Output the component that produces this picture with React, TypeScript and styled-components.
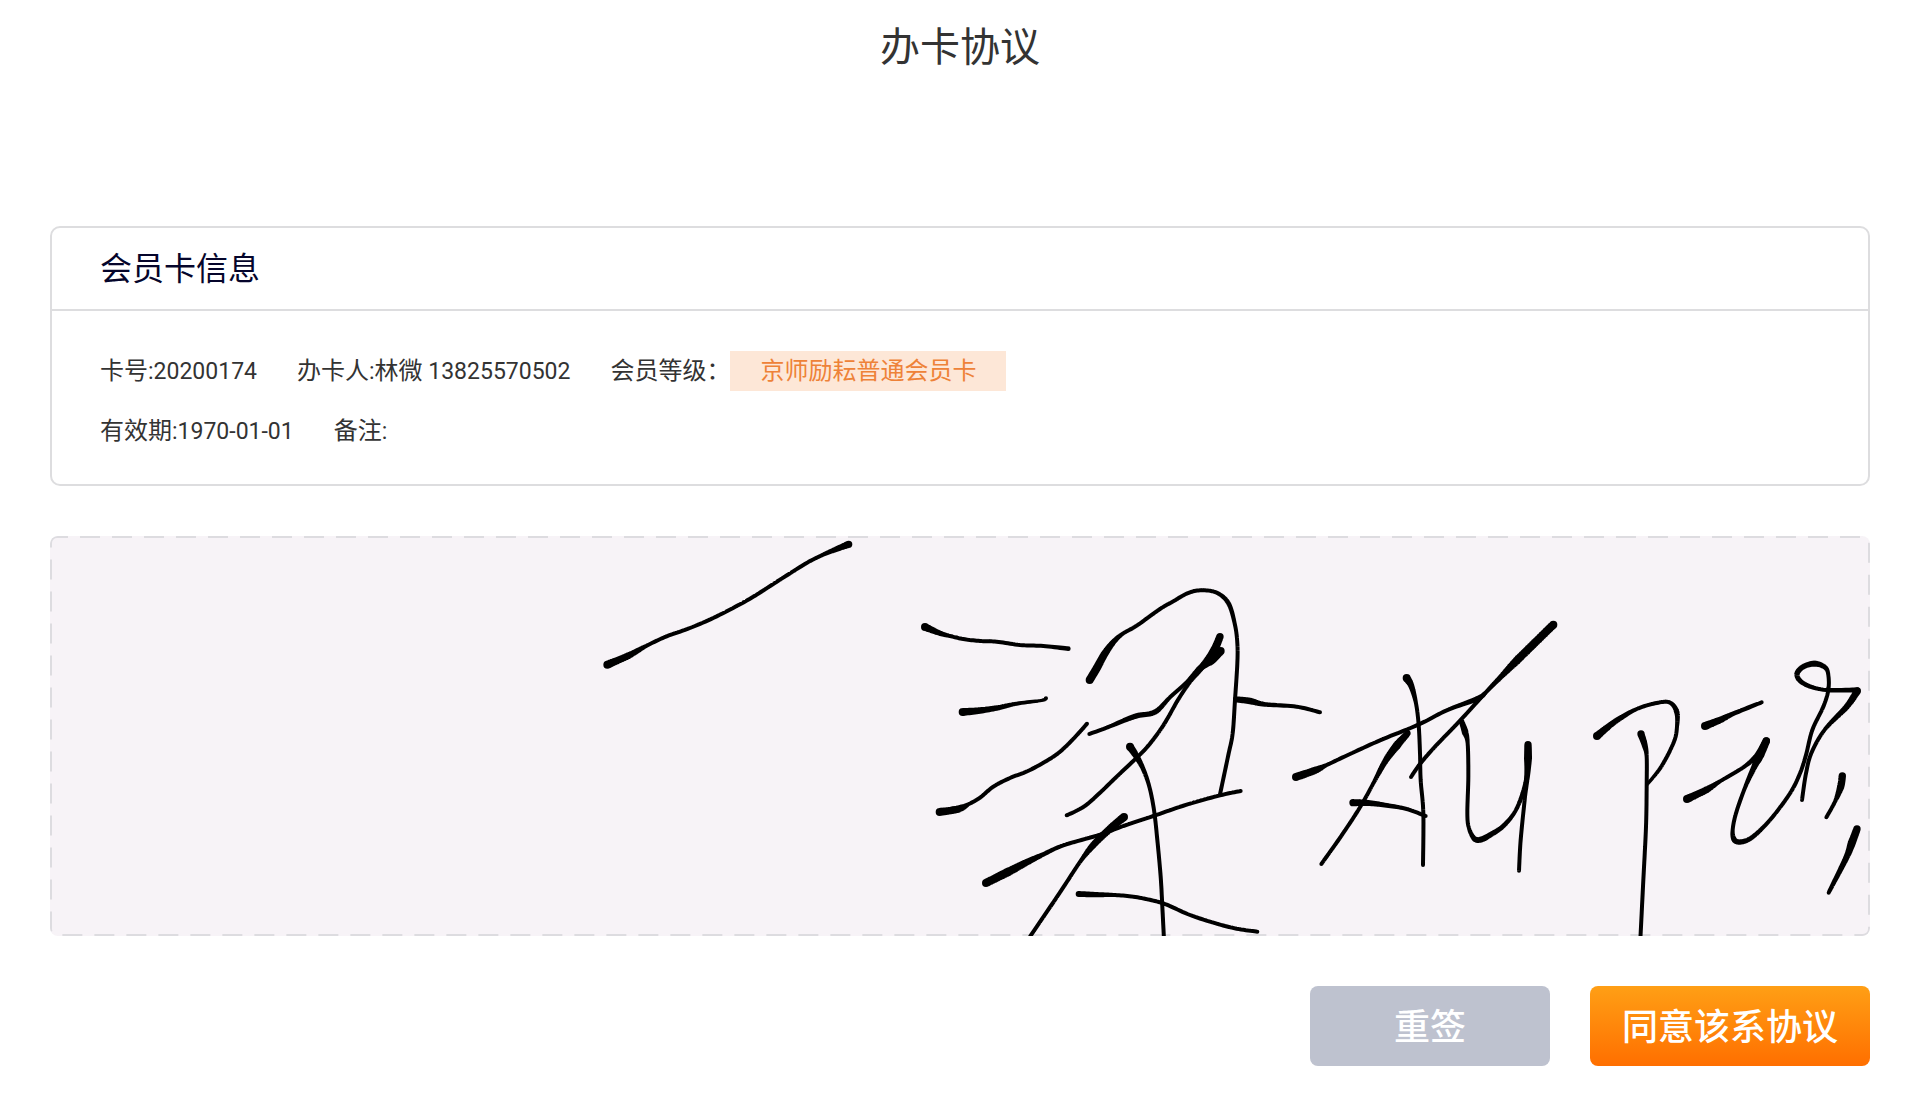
import React from "react";
import styled, { createGlobalStyle } from "styled-components";

const GlobalStyle = createGlobalStyle`
  * { box-sizing: border-box; }
  body {
    margin: 0;
    background: #ffffff;
    color: #333333;
    font-family: Roboto, "Noto Sans CJK SC", sans-serif;
  }
`;

const Page = styled.main`
  display: flex;
  flex-direction: column;
  padding: 18px 50px 50px;
`;

const PageTitle = styled.h1`
  margin: 0 0 148px;
  font-size: 40px;
  font-weight: 400;
  line-height: 60px;
  text-align: center;
`;

const Card = styled.section`
  border: 2px solid #dddddf;
  border-radius: 10px;
  margin-bottom: 50px;
`;

const CardTitle = styled.h2`
  margin: 0;
  padding: 16px 48px 15px;
  border-bottom: 2px solid #dddddf;
  color: #05052b;
  font-size: 32px;
  font-weight: 400;
  line-height: 50px;
`;

const CardBody = styled.div`
  display: flex;
  flex-direction: column;
  gap: 20px;
  padding: 40px 48px 33px;
`;

const InfoRow = styled.div`
  display: flex;
  flex-wrap: wrap;
  gap: 0 40px;
  font-size: 24px;
  line-height: 40px;
`;

const InfoItem = styled.div`
  display: flex;
  align-items: baseline;
  white-space: pre;
`;

const Digits = styled.span`
  font-size: 23px;
  line-height: 24px;
`;

const LevelTag = styled.span`
  padding: 0 30px;
  background: #fde7d7;
  color: #ee8238;
`;

const SignaturePad = styled.section`
  position: relative;
  overflow: hidden;
  border-radius: 8px;
  background: #f7f3f7;
  margin-bottom: 50px;
`;

const DashedFrame = styled.svg`
  position: absolute;
  inset: 0;
  width: 100%;
  height: 100%;

  rect {
    width: calc(100% - 2px);
    height: calc(100% - 2px);
    fill: none;
    stroke: #dddce0;
    stroke-width: 2px;
    stroke-dasharray: 20 12;
    stroke-dashoffset: 9px;
  }
`;

const Ink = styled.svg`
  position: relative;
  display: block;
  width: 100%;
  height: auto;
`;

const Actions = styled.footer`
  display: flex;
  justify-content: flex-end;
  gap: 40px;
`;

const ActionButton = styled.button<{ $primary?: boolean }>`
  min-width: 240px;
  height: 80px;
  padding: 4px 32px 0;
  border: 0;
  border-radius: 8px;
  background: ${(p) => (p.$primary ? "linear-gradient(#ff9f15, #ff6f00)" : "#bec2cf")};
  color: #ffffff;
  font-family: inherit;
  font-size: 36px;
  font-weight: 500;
  line-height: 54px;
  white-space: nowrap;
  cursor: pointer;
`;

/* A pen sample: x, y and the radius of the nib at that point. */
type Sample = [number, number, number];

const between = (a: number, b: number, c: number, d: number, t: number) =>
  0.5 *
  (2 * b + (c - a) * t + (2 * a - 5 * b + 4 * c - d) * t * t + (3 * b - a - 3 * c + d) * t * t * t);

/* Runs a smooth curve through the samples and returns the outline of the ink. */
function inkPath(samples: Sample[]): string {
  const dots: Sample[] = [];
  const steps = 10;
  for (let i = 0; i < samples.length - 1; i++) {
    const a = samples[Math.max(i - 1, 0)];
    const b = samples[i];
    const c = samples[i + 1];
    const d = samples[Math.min(i + 2, samples.length - 1)];
    for (let s = 0; s < steps; s++) {
      const t = s / steps;
      dots.push([
        between(a[0], b[0], c[0], d[0], t),
        between(a[1], b[1], c[1], d[1], t),
        b[2] + (c[2] - b[2]) * t,
      ]);
    }
  }
  dots.push(samples[samples.length - 1]);

  const f = (n: number) => n.toFixed(1);
  let path = "";
  dots.forEach(([x, y, r], i) => {
    path += `M${f(x - r)} ${f(y)}a${r} ${r} 0 1 0 ${2 * r} 0a${r} ${r} 0 1 0 ${-2 * r} 0z`;
    const next = dots[i + 1];
    if (!next) return;
    const [x2, y2, r2] = next;
    const length = Math.hypot(x2 - x, y2 - y) || 1;
    const nx = -(y2 - y) / length;
    const ny = (x2 - x) / length;
    path += `M${f(x + nx * r)} ${f(y + ny * r)}L${f(x2 + nx * r2)} ${f(y2 + ny * r2)}L${f(x2 - nx * r2)} ${f(y2 - ny * r2)}L${f(x - nx * r)} ${f(y - ny * r)}z`;
  });
  return path;
}

const signature: { origin: [number, number]; strokes: Sample[][] }[] = [
  {
    origin: [1590, -48],
    strokes: [
      [[82, 434, 12], [145, 407, 10], [200, 377, 6], [260, 349, 6], [330, 324, 6], [410, 289, 6], [510, 236, 6], [600, 179, 6], [680, 129, 6], [725, 106, 6], [765, 89, 8], [806, 73, 11]],
      [[1035, 321, 12], [1078, 339, 8], [1110, 348, 6], [1150, 357, 6], [1200, 363, 6], [1250, 365, 6], [1320, 375, 6], [1390, 378, 6], [1465, 386, 7]],
      [[1148, 576, 12], [1195, 572, 10], [1250, 564, 8], [1310, 551, 6], [1385, 541, 5], [1398, 535, 6]],
      [[1079, 876, 12], [1135, 867, 11], [1165, 853, 6], [1200, 833, 6], [1240, 800, 6], [1290, 774, 6], [1350, 750, 6], [1420, 710, 6], [1460, 677, 6], [1500, 635, 6], [1521, 611, 6]],
      [[1218, 1089, 12], [1280, 1058, 13], [1340, 1027, 10], [1390, 1003, 7], [1450, 976, 6], [1560, 944, 6], [1630, 918, 6], [1720, 888, 6], [1820, 854, 6], [1920, 826, 6], [1982, 813, 6]],
    ],
  },
  {
    origin: [2910, 72],
    strokes: [
      [[209, 360, 12], [230, 325, 12], [255, 280, 11], [283, 243, 8], [310, 220, 6], [350, 197, 6], [420, 147, 6], [460, 124, 6], [500, 101, 6], [540, 91, 6], [590, 98, 6], [626, 131, 7], [645, 195, 6], [652, 250, 6], [652, 310, 6], [645, 420, 6], [638, 520, 6], [625, 585, 6], [600, 703, 6]],
      [[208, 522, 6], [260, 503, 6], [345, 469, 8], [405, 456, 8], [450, 412, 6], [500, 367, 6], [540, 325, 9], [575, 300, 13], [602, 273, 12]],
      [[600, 230, 11], [580, 275, 12], [545, 322, 9], [510, 366, 6], [475, 418, 6], [430, 496, 6], [385, 557, 6], [345, 598, 6], [290, 650, 6], [235, 703, 6], [190, 741, 6], [140, 766, 6]],
      [[330, 560, 12], [350, 590, 9], [370, 628, 7], [388, 680, 6], [402, 750, 6], [412, 840, 6], [422, 950, 6], [427, 1040, 6], [432, 1140, 6]],
      [[312, 771, 12], [270, 806, 11], [220, 855, 10], [180, 906, 6], [120, 997, 6], [30, 1130, 6]],
      [[176, 1002, 9], [230, 1004, 8], [280, 1005, 6], [340, 1010, 6], [400, 1022, 6], [440, 1034, 6], [510, 1065, 6], [590, 1091, 6], [650, 1106, 6], [712, 1115, 6]],
      [[648, 418, 9], [690, 423, 10], [735, 433, 7], [830, 440, 6], [900, 457, 6]],
    ],
  },
  {
    origin: [3690, 192],
    strokes: [
      [[48, 531, 12], [105, 511, 11], [140, 495, 6], [210, 462, 6], [300, 421, 6], [415, 374, 6], [500, 331, 6], [590, 297, 8], [615, 280, 6]],
      [[820, 74, 12], [770, 123, 12], [710, 182, 12], [665, 228, 8], [615, 280, 6], [540, 362, 6], [465, 440, 6], [420, 492, 6], [393, 531, 6]],
      [[380, 234, 12], [394, 258, 9], [408, 310, 6], [416, 375, 6], [420, 460, 6], [422, 540, 6], [430, 640, 6], [429, 795, 6]],
      [[383, 400, 9], [350, 437, 12], [315, 485, 9], [280, 550, 6], [240, 622, 6], [185, 706, 6], [124, 792, 6]],
      [[219, 608, 11], [265, 609, 9], [320, 616, 7], [380, 627, 6], [437, 648, 6]],
      [[545, 365, 8], [555, 395, 10], [563, 430, 6], [565, 530, 6], [562, 640, 6], [567, 685, 6], [584, 717, 8], [605, 718, 9], [635, 702, 8], [670, 678, 7], [705, 635, 6], [730, 575, 7], [742, 520, 6]],
      [[744, 434, 11], [744, 475, 12], [742, 520, 9], [735, 590, 6], [722, 720, 6], [717, 812, 6]],
    ],
  },
  {
    origin: [4560, 312],
    strokes: [
      [[81, 288, 12], [120, 256, 9], [150, 235, 8], [200, 207, 6], [255, 190, 6], [298, 187, 6], [320, 215, 8], [321, 260, 6], [312, 305, 6], [275, 378, 6], [232, 433, 5]],
      [[213, 282, 11], [224, 315, 9], [230, 350, 6], [230, 440, 6], [228, 560, 6], [220, 720, 6], [211, 900, 6]],
      [[405, 258, 12], [450, 240, 10], [490, 221, 7], [575, 187, 6]],
      [[351, 477, 12], [410, 449, 10], [450, 424, 6], [520, 382, 6], [560, 347, 8], [589, 303, 11]],
      [[589, 303, 11], [570, 345, 13], [553, 380, 9], [525, 443, 6], [498, 520, 6], [488, 570, 6], [492, 598, 8], [510, 606, 8], [545, 593, 7], [600, 540, 6], [660, 460, 6], [690, 400, 6], [708, 345, 6], [727, 270, 6], [760, 200, 6], [775, 150, 6], [775, 105, 6], [765, 82, 7], [735, 71, 9], [700, 80, 8], [681, 103, 8], [700, 130, 7], [760, 149, 6], [862, 150, 8]],
      [[862, 153, 11], [830, 200, 9], [765, 268, 6], [725, 337, 6], [708, 400, 6], [696, 480, 6]],
      [[817, 408, 11], [812, 440, 11], [795, 485, 6], [769, 532, 6]],
      [[861, 567, 11], [845, 610, 12], [828, 655, 9], [776, 758, 6]],
    ],
  },
];

export default function App() {
  return (
    <>
      <GlobalStyle />
      <Page>
        <PageTitle>办卡协议</PageTitle>

        <Card aria-labelledby="card-title">
          <CardTitle id="card-title">会员卡信息</CardTitle>
          <CardBody>
            <InfoRow>
              <InfoItem>
                卡号<Digits>:20200174</Digits>
              </InfoItem>
              <InfoItem>
                办卡人<Digits>:</Digits>林微<Digits> 13825570502</Digits>
              </InfoItem>
              <InfoItem>
                会员等级：<LevelTag>京师励耘普通会员卡</LevelTag>
              </InfoItem>
            </InfoRow>
            <InfoRow>
              <InfoItem>
                有效期<Digits>:1970-01-01</Digits>
              </InfoItem>
              <InfoItem>
                备注<Digits>:</Digits>
              </InfoItem>
            </InfoRow>
          </CardBody>
        </Card>

        <SignaturePad>
          <DashedFrame aria-hidden="true">
            <rect x="1" y="1" rx="6" />
          </DashedFrame>
          <Ink viewBox="0 0 5460 1200" aria-hidden="true">
            {signature.map(({ origin, strokes }, g) => (
              <g key={g} transform={`translate(${origin[0]} ${origin[1]})`}>
                {strokes.map((stroke, i) => (
                  <path key={i} d={inkPath(stroke)} />
                ))}
              </g>
            ))}
          </Ink>
        </SignaturePad>

        <Actions>
          <ActionButton type="button">重签</ActionButton>
          <ActionButton type="button" $primary>
            同意该系协议
          </ActionButton>
        </Actions>
      </Page>
    </>
  );
}
